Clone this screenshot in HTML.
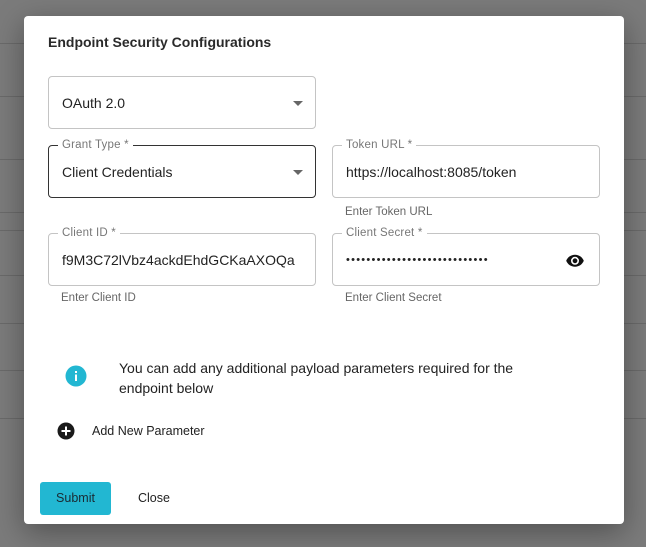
<!DOCTYPE html>
<html><head><style>
*{box-sizing:border-box;margin:0;padding:0}
body{width:646px;height:547px;background:#7b7b7b;position:relative;overflow:hidden;font-family:"Liberation Sans","DejaVu Sans",sans-serif;color:#222}
.ln{position:absolute;height:1px;background:#6a6a6a;left:0;width:646px}
.dlg{position:absolute;left:24px;top:16px;width:600px;height:508px;background:#fff;border-radius:4px;box-shadow:0 8px 30px rgba(0,0,0,.35)}
.t{position:absolute;left:24px;top:18px;font-size:14px;font-weight:bold;color:#2a2a2a}
.f{position:absolute;border:1px solid #c4c4c4;border-radius:4px;font-size:14px;color:#222}
.f .v{position:absolute;left:13px;top:50%;transform:translateY(-50%)}
.lab{position:absolute;top:-8px;left:9px;background:#fff;padding:0 4px;font-size:11.5px;color:#777;line-height:14px;letter-spacing:.2px}
.arr{position:absolute;right:12px;top:50%;margin-top:-2px;border:5px solid transparent;border-top:5px solid #666;border-bottom:0}
.h{position:absolute;font-size:11.5px;color:#666}
</style></head><body>
<div class="ln" style="top:43px"></div><div class="ln" style="top:96px"></div><div class="ln" style="top:159px"></div><div class="ln" style="top:212px"></div><div class="ln" style="top:230px"></div><div class="ln" style="top:275px"></div><div class="ln" style="top:323px"></div><div class="ln" style="top:370px"></div><div class="ln" style="top:418px"></div>
<div class="dlg">
<div class="t">Endpoint Security Configurations</div>
<div class="f" style="left:24px;top:60px;width:268px;height:53px"><span class="v">OAuth 2.0</span><span class="arr"></span></div>
<div class="f" style="left:24px;top:129px;width:268px;height:53px;border-color:#333"><span class="lab">Grant Type *</span><span class="v">Client Credentials</span><span class="arr"></span></div>
<div class="f" style="left:308px;top:129px;width:268px;height:53px"><span class="lab">Token URL *</span><span class="v">https://localhost:8085/token</span></div>
<div class="h" style="left:321px;top:190px">Enter Token URL</div>
<div class="f" style="left:24px;top:217px;width:268px;height:53px"><span class="lab">Client ID *</span><span class="v">f9M3C72lVbz4ackdEhdGCKaAXOQa</span></div>
<div class="h" style="left:37px;top:276px">Enter Client ID</div>
<div class="f" style="left:308px;top:217px;width:268px;height:53px"><span class="lab">Client Secret *</span><span class="v" style="font-size:11px;letter-spacing:1.25px">••••••••••••••••••••••••••••</span>
<svg style="position:absolute;right:14px;top:18px" width="20" height="16" viewBox="0 1 24 20"><path d="M12 4.5C7 4.5 2.7 7.6 1 12c1.7 4.4 6 7.5 11 7.5s9.3-3.1 11-7.5c-1.7-4.4-6-7.5-11-7.5zM12 17a5 5 0 110-10 5 5 0 010 10zm0-8a3 3 0 100 6 3 3 0 000-6z" fill="#111"/></svg></div>
<div class="h" style="left:321px;top:276px">Enter Client Secret</div>
<svg style="position:absolute;left:41px;top:349px" width="22" height="22"><circle cx="11" cy="11" r="10.5" fill="#22b7d2"/><rect x="10" y="9.5" width="2" height="6.5" fill="#fff"/><rect x="10" y="6" width="2" height="2" fill="#fff"/></svg>
<div style="position:absolute;left:95px;top:342px;width:440px;font-size:14px;line-height:20px;color:#222">You can add any additional payload parameters required for the endpoint below</div>
<svg style="position:absolute;left:33px;top:406px" width="18" height="18"><circle cx="9" cy="9" r="8.5" fill="#1a1a1a"/><rect x="4.5" y="8" width="9" height="2" fill="#fff"/><rect x="8" y="4.5" width="2" height="9" fill="#fff"/></svg>
<div style="position:absolute;left:68px;top:408px;font-size:12.5px;color:#222">Add New Parameter</div>
<div style="position:absolute;left:16px;top:466px;width:71px;height:33px;background:#22b7d2;border-radius:3px;font-size:12.5px;color:#1a2a33;text-align:center;line-height:33px">Submit</div>
<div style="position:absolute;left:114px;top:475px;font-size:12.5px;color:#222">Close</div>
</div>
</body></html>
